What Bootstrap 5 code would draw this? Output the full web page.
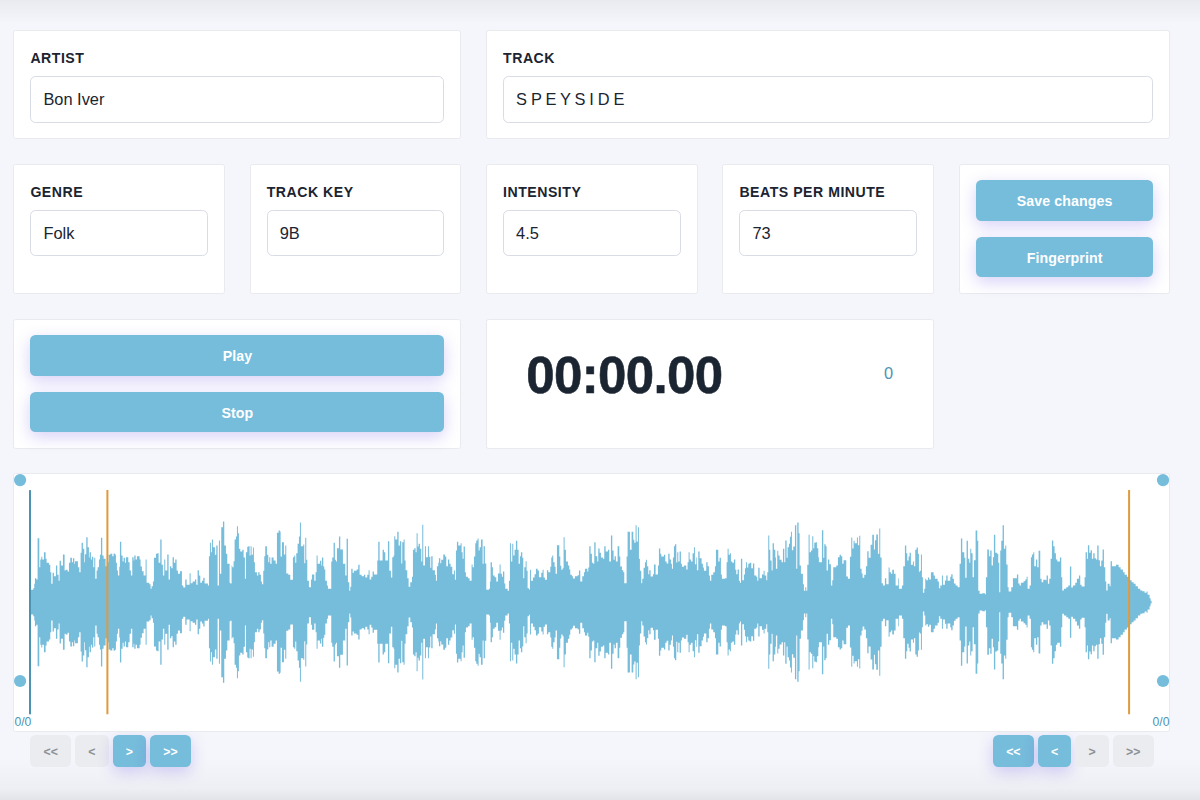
<!DOCTYPE html>
<html lang="en">
<head>
<meta charset="utf-8">
<meta name="viewport" content="width=device-width, initial-scale=1">
<title>Track editor</title>
<link rel="stylesheet" href="https://cdn.jsdelivr.net/npm/bootstrap@5.3.0/dist/css/bootstrap.min.css">
<style>
  :root { --sky: #76bcdb; --ink: #1b2431; --steel: #4e93b1; }
  body { background: #f5f6fb; color: var(--ink); font-family: "Liberation Sans", Arial, sans-serif; height: 800px; overflow: hidden;
    background-image: linear-gradient(#e9eaef, rgba(245,246,251,0) 24px), linear-gradient(to top, #e2e3e8, #eeeff4 12px, rgba(245,246,251,0) 42px); }
  .editor { padding: 30.2px 29.5px 0 13.4px; }
  .tiles { grid-template-columns: repeat(5, minmax(0, 1fr)); grid-template-rows: 108.8px 130.4px 130.2px 258.2px; gap: 24.6px; }
  .span-2 { grid-column: span 2; } .span-3 { grid-column: span 3; } .span-5 { grid-column: 1 / -1; }
  .tile { border: 1px solid #e9eaee; border-radius: 2.5px; padding: 15.8px 16px; background: #fff; }
  .tile label { font-size: 14.1px; font-weight: 700; letter-spacing: .52px; line-height: 20px; margin-bottom: 8.2px; padding-top: 1.2px; text-transform: uppercase; display: block; }
  .tile .form-control { height: 46.4px; border: 1px solid #d9dbe5; border-radius: 5.5px; font-size: 16.4px; color: var(--ink); padding: .8px 12px 0; }
  .spaced { word-spacing: -.65px; }
  .btn-sky { background: var(--sky); color: #fff; font-weight: 700; font-size: 14.2px; letter-spacing: .1px; border: 0; border-radius: 5.5px; box-shadow: 0 5px 16px rgba(82,63,225,.24); }
  .btn-sky:hover { background: #62afd1; color: #fff; }
  .tall { height: 40.3px; padding: 2px 0 0; line-height: 1; }
  .stack { gap: 16px; }
  .clock { font-size: 51px; font-weight: 700; letter-spacing: -.65px; line-height: 60px; margin: 10.5px 0 0 23.2px; -webkit-text-stroke: .6px var(--ink); }
  .beat { color: var(--steel); font-size: 16.4px; line-height: 24px; margin: 26px 24px 0 0; }
  .wave { position: absolute; inset: 0; width: 100%; height: 100%; }
  .count { position: absolute; bottom: 0; font-size: 12.2px; line-height: 17px; color: var(--steel); }
  .seek { padding: 3.6px 17px 0; }
  .seek .btn { height: 32.3px; font-size: 12.3px; letter-spacing: 0; padding: 2px 0 0; line-height: 1; }
  .wide { width: 40.5px; } .slim { width: 33.7px; }
  .seek .btn-off { background: #ebecf0; color: #8c9095; border: 0; border-radius: 5.5px; font-weight: 700; }
</style>
</head>
<body>
<main class="editor">
  <div class="tiles d-grid">
    <section class="tile span-2"><label for="artist">Artist</label><input id="artist" class="form-control" value="Bon Iver"></section>
    <section class="tile span-3"><label for="track">Track</label><input id="track" class="form-control spaced" value="S P E Y S I D E"></section>

    <section class="tile"><label for="genre">Genre</label><input id="genre" class="form-control" value="Folk"></section>
    <section class="tile"><label for="key">Track key</label><input id="key" class="form-control" value="9B"></section>
    <section class="tile"><label for="intensity">Intensity</label><input id="intensity" class="form-control" value="4.5"></section>
    <section class="tile"><label for="bpm">Beats per minute</label><input id="bpm" class="form-control" value="73"></section>
    <section class="tile d-flex flex-column stack">
      <button class="btn btn-sky tall w-100">Save changes</button>
      <button class="btn btn-sky tall w-100">Fingerprint</button>
    </section>

    <section class="tile span-2 d-flex flex-column stack">
      <button class="btn btn-sky tall w-100">Play</button>
      <button class="btn btn-sky tall w-100">Stop</button>
    </section>
    <section class="tile span-2 d-flex justify-content-between align-items-start">
      <div class="clock">00:00.00</div>
      <div class="beat">0</div>
    </section>

    <section class="tile span-5 position-relative">
      <svg class="wave" viewBox="14.4 474.2 1155.1 256.2" preserveAspectRatio="none" aria-label="Waveform">
        <path id="wave" fill="#76bcdb"/>
        <path d="M30.4 490.3V714.5" stroke="#4c93b2" stroke-width="2"/>
        <path d="M107.8 490.3V714.5M1129.5 490.3V714.5" stroke="#e09a3c" stroke-width="2"/>
        <g fill="#76bcdb"><circle cx="20.5" cy="480.3" r="6.1"/><circle cx="20.5" cy="681.2" r="6.1"/><circle cx="1163.4" cy="480.3" r="6.1"/><circle cx="1163.4" cy="681.2" r="6.1"/></g>
      </svg>
      <span class="count start-0">0/0</span>
      <span class="count end-0">0/0</span>
    </section>
  </div>

  <div class="seek d-flex justify-content-between">
    <div class="d-flex gap-1">
      <button class="btn btn-off wide">&lt;&lt;</button>
      <button class="btn btn-off slim">&lt;</button>
      <button class="btn btn-sky slim">&gt;</button>
      <button class="btn btn-sky wide">&gt;&gt;</button>
    </div>
    <div class="d-flex gap-1">
      <button class="btn btn-sky wide">&lt;&lt;</button>
      <button class="btn btn-sky slim">&lt;</button>
      <button class="btn btn-off slim">&gt;</button>
      <button class="btn btn-off wide">&gt;&gt;</button>
    </div>
  </div>
</main>
<script src="https://cdn.jsdelivr.net/npm/bootstrap@5.3.0/dist/js/bootstrap.bundle.min.js"></script>
<script>
  // Peak levels by section: [section start, "offset:level ..."], both in thirds of a unit.
  const peaks = [
    [0, "94:37 101:42 104:55 106:72 110:68 114:192 119:105 122:128 125:136 128:128 133:150 138:130 141:118 148:112 152:90 155:55 159:88 163:78 169:110 173:82 177:64 180:124 184:110 190:143 195:95 198:97 204:92 208:118 212:133 217:120 220:132 224:115 226:123 235:105 239:90 243:148 246:178 250:160 254:120 256:144 260:195 264:165 268:134 270:150 274:128 277:136 281:105 284:133 287:70 291:95 294:105 298:128 301:142 304:193 308:140 312:130 318:108 322:120 327:142 332:145 338:138 342:146 346:143 349:118 352:95 355:80 359:106 361:181 365:140 369:122 372:133 376:118 379:135 386:120 390:95 394:80 398:135 402:125 404:140 408:128 412:138 420:128 423:107 427:93 432:80 438:128 441:58 449:54 453:40 456:48 460:62 463:133 469:145 473:147 477:118 482:188 486:112 490:80 494:128 497:95 503:143 507:68 511:108 515:102 519:135 523:118 527:128 531:95 535:85 541:93 547:50 551:44 557:68 561:52 570:87 573:57 579:62 586:68 590:52 594:96 598:80 602:58 607:64 611:73 615:56 625:50 628:138 631:178 634:150 637:188 640:165 646:142 650:170 654:50 658:185 661:85 665:225 670:242 674:170 679:145 683:115"],
    [690, "0:58 2:56 6:110 8:105 12:123 15:188 19:197 22:228 25:207 28:160 32:152 38:157 42:134 46:70 49:150 53:166 56:168 60:140 63:168 66:142 70:164 73:120 76:90 82:80 86:90 90:82 94:62 97:54 101:94 104:138 107:168 112:142 116:120 119:135 122:115 126:134 132:125 138:115 142:208 147:215 151:212 153:137 157:180 163:143 167:170 170:86 176:82 182:67 190:135 194:140 197:118 200:147 204:175 208:197 211:239 214:168 221:173 224:117 227:193 230:127 233:64 238:45 244:68 247:83 254:64 258:90 261:140 264:115 271:124 275:110 277:134 281:107 284:98 287:64 292:50 295:40 305:122 308:134 312:178 316:127 319:122 322:162 328:197 332:158 340:115 347:80 351:190 355:60 359:34 362:46 365:100 369:88 373:94 381:98 386:112 390:82 396:78 403:82 407:74 413:82 417:96 420:68 425:76 429:92 433:83 443:125 446:181 450:125 459:157 463:150 467:125 475:183 479:94 484:74 488:135 492:140 494:198 497:188 503:211 507:170 511:183 515:116 518:180 522:188 525:125 528:96 533:72 537:46 542:60 547:76 550:157 554:162 558:150 561:207 564:167 567:175 571:160 575:122 578:232 581:110 586:168 589:135 595:168 598:136 602:103 605:138 609:96 616:82 619:64 622:108 626:118 628:132 632:117 635:127 641:143 646:137 650:108 655:128 659:115 663:106 668:84 673:95 676:67 679:155 682:181 686:170"],
    [1380, "0:170 3:177 6:150 9:130 12:167 16:90 19:76 25:72 30:64 36:113 39:105 43:137 47:177 50:185 54:191 57:155 60:165 64:188 69:115 72:168 76:116 80:37 88:40 91:62 93:120 97:105 100:80 105:75 110:62 115:86 120:113 123:85 127:76 130:92 134:56 137:40 144:34 148:64 151:177 154:122 158:175 161:140 165:157 169:184 173:157 177:115 181:138 184:150 188:133 191:72 194:105 198:123 201:94 204:42 208:38 211:97 214:64 220:74 225:84 229:100 234:95 238:75 245:88 249:97 252:74 256:67 262:96 266:90 272:106 275:134 278:140 281:120 285:106 288:85 292:171 299:137 302:109 305:97 309:102 312:195 315:157 319:122 325:110 329:98 332:82 337:78 340:71 346:78 354:81 358:95 362:62 368:78 373:90 376:100 383:92 386:104 389:168 393:145 397:118 401:115 404:180 408:138 413:122 416:161 420:148 424:134 430:130 434:168 438:152 445:157 449:122 454:200 458:155 462:127 465:138 469:122 474:168 479:137 482:107 487:96 491:90 494:57 501:137 504:211 511:157 516:211 521:187 524:178 528:231 531:182 535:225 538:130 541:94 545:57 548:70 552:103 556:120 559:127 562:108 566:84 569:96 573:77 580:84 583:113 588:83 595:110 598:161 602:145 605:137 613:142 617:122 621:116 626:145 630:128 634:115 637:100 640:134 643:168 646:174 650:119 653:150 656:122 660:152 664:115 667:106 673:110 680:98 684:120 687:150"],
    [2070, "0:128 4:122 9:147 13:165 16:114 20:134 22:96 26:152 30:132 36:115 40:104 43:94 50:120 54:108 58:80 61:64 65:82 71:90 76:108 79:157 86:122 90:133 94:83 97:70 106:72 111:120 114:160 117:142 121:147 124:122 128:118 133:128 137:97 140:84 144:98 148:64 151:58 154:130 158:66 163:83 166:102 169:120 172:104 176:115 180:118 185:102 190:116 194:80 200:76 203:64 206:103 210:72 217:83 222:94 225:80 230:66 233:90 236:200 239:157 242:125 246:95 249:177 253:157 257:134 259:100 263:154 266:140 270:127 276:120 280:160 284:120 287:185 291:133 294:165 298:175 301:196 304:211 307:156 311:167 316:231 320:100 323:239 327:207 330:110 334:85 340:54 343:34 347:45 350:34 353:112 357:202 360:150 364:155 368:198 371:162 374:178 378:180 382:162 386:135 388:120 397:216 401:133 404:174 408:168 411:95 415:128 419:114 424:50 428:66 431:105 440:110 445:135 450:142 454:138 458:115 462:126 470:77 475:70 481:136 485:194 488:161 492:184 495:177 502:194 505:171 509:199 512:100 516:86 519:73 524:82 529:108 533:153 537:133 543:172 548:202 553:158 556:186 560:203 565:145 569:221 572:134 576:57 580:50 586:72 590:54 597:104 600:90 604:85 608:97 613:85 618:50 626:72 628:40 637:50 641:108 646:170 650:147 653:125 657:137 660:148 664:112 670:122 673:108 677:157 681:164 685:145 688:90"],
    [2760, "0:94 4:143 7:75 10:28 14:40 17:70 20:66 25:74 29:68 34:90 42:80 46:70 54:62 58:42 62:50 67:80 70:52 76:65 80:80 84:64 92:76 95:84 99:70 103:56 108:50 114:45 120:115 124:191 128:150 134:133 137:73 141:184 145:130 149:118 152:160 155:147 159:75 163:126 168:215 173:184 176:34 180:25 188:27 196:24 199:75 203:158 208:138 212:155 216:110 220:135 223:202 227:148 232:145 236:118 239:30 242:155 245:184 249:231 253:160 257:170 260:113 264:45 267:32 275:45 280:72 292:83 296:56 300:50 304:58 312:63 317:68 321:76 324:40 330:50 334:135 337:143 341:150 344:108 349:128 353:105 357:154 362:70 366:60 371:67 378:66 381:80 385:55 389:70 393:130 397:185 401:168 405:147 409:128 413:122 421:134 425:75 428:35 433:40 440:45 446:50 451:107 455:44 460:50 467:58 472:70 478:80 482:52 486:47 495:75 498:150 502:130 505:171 509:148 513:156 517:130 521:147 525:132 529:128 533:170 537:126 541:108 545:125 549:158 553:105 557:62 560:35 564:55 570:48 573:123 577:108 589:112 597:105 603:98 610:90 615:82 622:76 630:66 636:60 642:55 648:48 655:40 662:35 668:33 675:28 681:32 684:22 690:12 693:4 696:0"]
  ];
  const points = peaks.flatMap(([start, list]) => list.split(" ").map(p => {
    const [x, level] = p.split(":").map(Number);
    return [(start + x) / 3, level / 3];
  }));
  const mid = 602.4;
  let d = "";
  points.slice(0, -1).forEach(([x, h], i) => {
    d += `M${x.toFixed(2)} ${(mid - h).toFixed(2)}H${points[i + 1][0].toFixed(2)}V${(mid + h).toFixed(2)}H${x.toFixed(2)}Z`;
  });
  document.getElementById("wave").setAttribute("d", d);
</script>
</body>
</html>
